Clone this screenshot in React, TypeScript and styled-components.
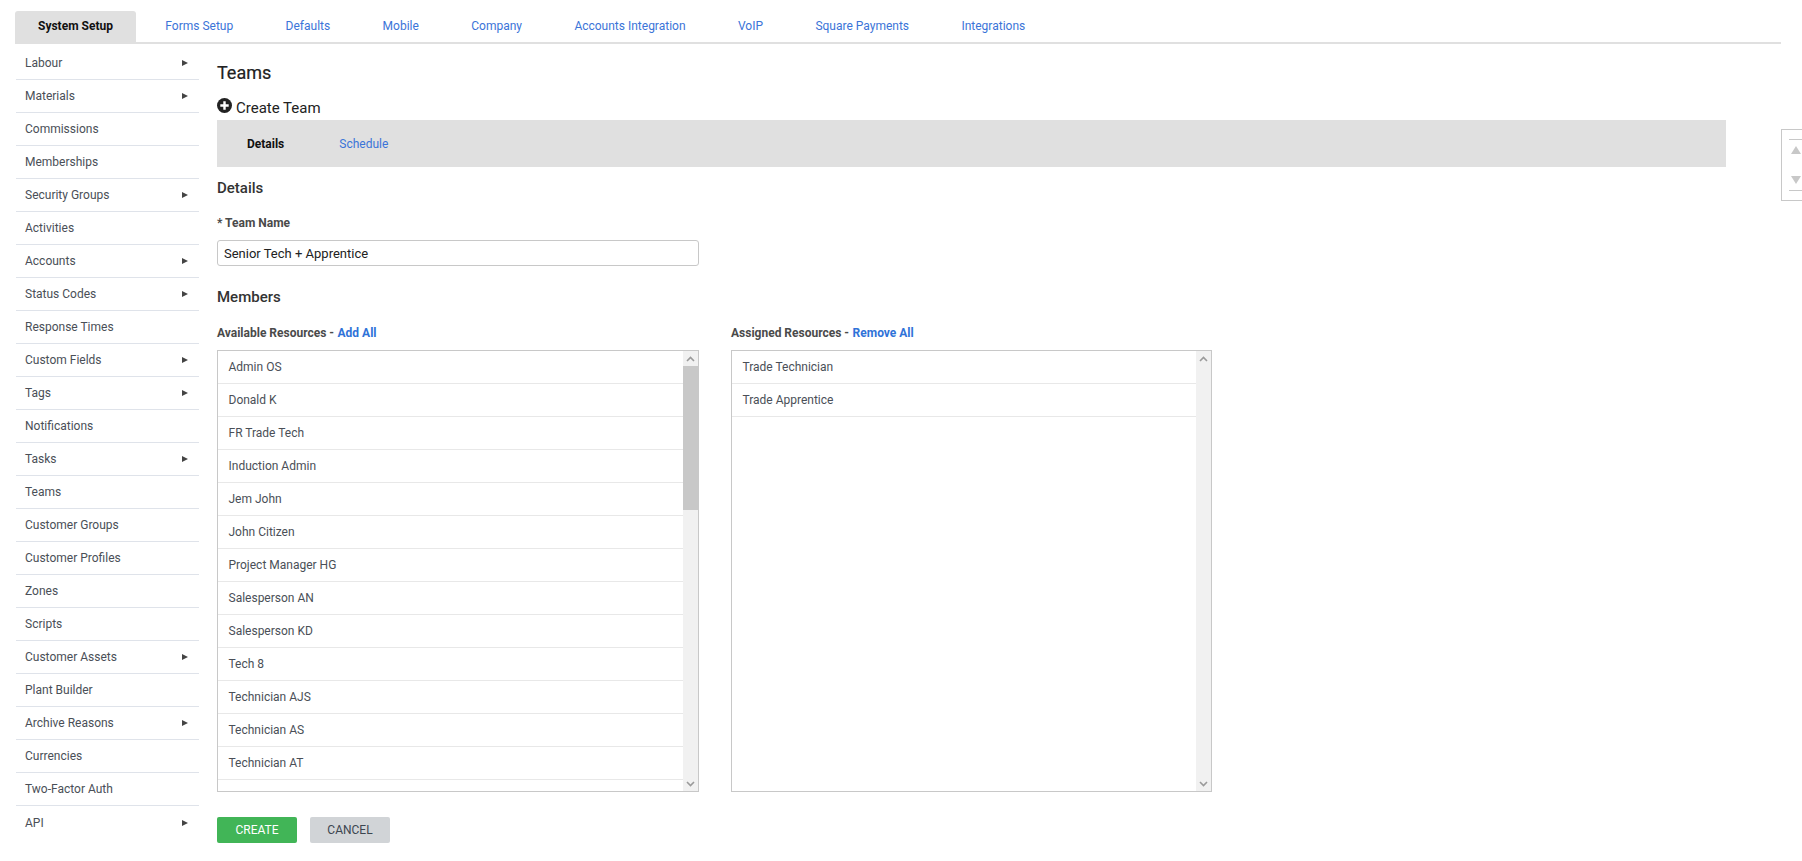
import React from 'react';
import styled, { createGlobalStyle } from 'styled-components';

const Global = createGlobalStyle`
  html, body { margin: 0; padding: 0; background: #fff; height: 100%; overflow: hidden; }
  body { font-family: Roboto, "Liberation Sans", sans-serif; font-size: 12px; color: #444; }
  * { box-sizing: border-box; }
`;
const Page = styled.div`
  position: relative;
  width: 1802px;
  height: 861px;
  padding: 11px 21px 0 15px;
  overflow: hidden;
`;
const TabBar = styled.nav`
  display: flex;
  gap: 6.4px;
  height: 33px;
  border-bottom: 2px solid #e0e0e0;
`;
const Tab = styled.a<{ $active?: boolean }>`
  height: 31px;
  display: flex;
  align-items: center;
  padding: 0 23px 1px;
  font-size: 12px;
  border-radius: 3px 3px 0 0;
  color: ${p => (p.$active ? '#111' : '#3b74d8')};
  font-weight: ${p => (p.$active ? 700 : 400)};
  background: ${p => (p.$active ? '#e0e0e0' : 'transparent')};
`;
const Body = styled.div`
  display: flex;
  align-items: flex-start;
`;
const Side = styled.ul`
  list-style: none;
  margin: 3px 0 0 1px;
  padding: 0;
  width: 183px;
  flex: none;
`;
const SideItem = styled.li`
  height: 33px;
  display: flex;
  align-items: center;
  justify-content: space-between;
  padding: 0 11px 0 9px;
  font-size: 12px;
  color: #4a4f57;
  border-bottom: 1px solid #dfe3ea;
  &:last-child { border-bottom: none; }
`;
const Arrow = styled.span`
  width: 0;
  height: 0;
  border-left: 6px solid #444;
  border-top: 3.5px solid transparent;
  border-bottom: 3.5px solid transparent;
`;
const Main = styled.main`
  margin-left: 18px;
  width: 1509px;
  flex: none;
`;
const Title = styled.h1`
  margin: 17px 0 0;
  font-size: 18px;
  line-height: 24px;
  font-weight: 400;
  color: #222;
  -webkit-text-stroke: 0.2px #222;
`;
const CreateRow = styled.div`
  display: flex;
  align-items: center;
  height: 20px;
  margin-top: 13px;
  gap: 4px;
  font-size: 15px;
  color: #222;
  svg { margin-top: -6px; }
`;
const SubBar = styled.div`
  display: flex;
  align-items: center;
  height: 47px;
  margin-top: 2px;
  background: #e0e0e0;
  padding-left: 30px;
  gap: 55px;
`;
const SubTab = styled.a<{ $active?: boolean }>`
  font-size: 12px;
  font-weight: ${p => (p.$active ? 700 : 400)};
  color: ${p => (p.$active ? '#111' : '#3b74d8')};
`;
const Heading = styled.h2`
  margin: 0;
  font-size: 15px;
  line-height: 20px;
  font-weight: 500;
  color: #333;
`;
const DetailsHeading = styled(Heading)`
  margin-top: 11px;
`;
const MembersHeading = styled(Heading)`
  margin-top: 21px;
`;
const Label = styled.label`
  display: block;
  margin-top: 17px;
  font-size: 12px;
  line-height: 16px;
  font-weight: 700;
  color: #4a4a4a;
`;
const NameInput = styled.input`
  display: block;
  width: 482px;
  height: 26px;
  margin-top: 9px;
  padding: 0 6px;
  border: 1px solid #c8c8c8;
  border-radius: 3px;
  font: 13px Roboto, sans-serif;
  color: #222;
  outline: none;
`;
const Columns = styled.div`
  display: flex;
  gap: 32px;
  margin-top: 18px;
`;
const Column = styled.section<{ $w: number }>`
  width: ${p => p.$w}px;
`;
const ColLabel = styled.div`
  font-size: 12px;
  line-height: 16px;
  font-weight: 700;
  color: #4a4a4a;
  a { color: #2f72d8; margin-left: 0.5px; }
`;
const ListBox = styled.div`
  position: relative;
  display: flex;
  height: 442px;
  margin-top: 9px;
  border: 1px solid #c8c8c8;
  overflow: hidden;
`;
const Rows = styled.ul`
  list-style: none;
  margin: 0;
  padding: 0;
  flex: 1;
  overflow: hidden;
`;
const Row = styled.li`
  height: 33px;
  display: flex;
  align-items: center;
  padding-left: 10.5px;
  font-size: 12px;
  color: #4a4f57;
  border-bottom: 1px solid #e8e8e8;
`;
const Track = styled.div`
  width: 15px;
  flex: none;
  display: flex;
  flex-direction: column;
  background: #f1f1f1;
`;
const ScrollBtn = styled.div`
  height: 15px;
  flex: none;
  display: flex;
  align-items: center;
  justify-content: center;
`;
const TrackFill = styled.div`
  flex: 1;
`;
const Thumb = styled.div<{ $h: number }>`
  height: ${p => p.$h}px;
  background: #c8c8c8;
`;
const Buttons = styled.div`
  display: flex;
  gap: 13px;
  margin-top: 25px;
`;
const Btn = styled.button<{ $primary?: boolean }>`
  width: 80px;
  height: 26px;
  border: none;
  border-radius: 2px;
  font: 12px Roboto, sans-serif;
  background: ${p => (p.$primary ? '#41b557' : '#d1d4d7')};
  color: ${p => (p.$primary ? '#fff' : '#3c4650')};
`;
const Widget = styled.aside`
  position: absolute;
  left: 1781px;
  top: 129px;
  width: 21px;
  height: 72px;
  border: 1px solid #c8c8c8;
  border-right: none;
  padding: 9px 0 9px 7px;
`;
const WidgetInner = styled.div`
  height: 100%;
  border-top: 1px solid #c8c8c8;
  border-bottom: 1px solid #c8c8c8;
  display: flex;
  flex-direction: column;
  justify-content: space-between;
  padding: 6px 0 6px 2px;
`;
const Tri = styled.span<{ $down?: boolean }>`
  width: 0;
  height: 0;
  border-left: 5px solid transparent;
  border-right: 5px solid transparent;
  ${p => (p.$down ? 'border-top: 8px solid #c8c8c8;' : 'border-bottom: 8px solid #c8c8c8;')}
`;

const Chevron = ({ down }: { down?: boolean }) => (
  <svg width="9" height="6" viewBox="0 0 9 6">
    <path d={down ? 'M1 1l3.5 3.5L8 1' : 'M1 5l3.5-3.5L8 5'} fill="none" stroke={'#9a9a9a'} strokeWidth="1.6" />
  </svg>
);

const tabs = ['System Setup', 'Forms Setup', 'Defaults', 'Mobile', 'Company', 'Accounts Integration', 'VoIP', 'Square Payments', 'Integrations'];
const side: [string, boolean][] = [
  ['Labour', true], ['Materials', true], ['Commissions', false], ['Memberships', false], ['Security Groups', true],
  ['Activities', false], ['Accounts', true], ['Status Codes', true], ['Response Times', false], ['Custom Fields', true],
  ['Tags', true], ['Notifications', false], ['Tasks', true], ['Teams', false], ['Customer Groups', false],
  ['Customer Profiles', false], ['Zones', false], ['Scripts', false], ['Customer Assets', true], ['Plant Builder', false],
  ['Archive Reasons', true], ['Currencies', false], ['Two-Factor Auth', false], ['API', true],
];
const available = ['Admin OS', 'Donald K', 'FR Trade Tech', 'Induction Admin', 'Jem John', 'John Citizen', 'Project Manager HG', 'Salesperson AN', 'Salesperson KD', 'Tech 8', 'Technician AJS', 'Technician AS', 'Technician AT'];
const assigned = ['Trade Technician', 'Trade Apprentice'];

export default function App() {
  return (
    <Page>
      <Global />
      <TabBar>
        {tabs.map((t, i) => <Tab key={t} $active={i === 0}>{t}</Tab>)}
      </TabBar>
      <Body>
        <Side>
          {side.map(([t, a]) => <SideItem key={t}>{t}{a && <Arrow />}</SideItem>)}
        </Side>
        <Main>
          <Title>Teams</Title>
          <CreateRow>
            <svg width="15" height="15" viewBox="0 0 15 15">
              <circle cx="7.5" cy="7.5" r="7.5" fill="#222" />
              <path d="M6.3 3.3h2.4v3h3v2.4h-3v3H6.3v-3h-3V6.3h3z" fill="#fff" />
            </svg>
            Create Team
          </CreateRow>
          <SubBar>
            <SubTab $active>Details</SubTab>
            <SubTab>Schedule</SubTab>
          </SubBar>
          <DetailsHeading>Details</DetailsHeading>
          <Label>* Team Name</Label>
          <NameInput readOnly value="Senior Tech + Apprentice" />
          <MembersHeading>Members</MembersHeading>
          <Columns>
            <Column $w={482}>
              <ColLabel>Available Resources - <a>Add All</a></ColLabel>
              <ListBox>
                <Rows>{available.map(t => <Row key={t}>{t}</Row>)}</Rows>
                <Track>
                  <ScrollBtn><Chevron /></ScrollBtn>
                  <Thumb $h={144} />
                  <TrackFill />
                  <ScrollBtn><Chevron down /></ScrollBtn>
                </Track>
              </ListBox>
            </Column>
            <Column $w={481}>
              <ColLabel>Assigned Resources - <a>Remove All</a></ColLabel>
              <ListBox>
                <Rows>{assigned.map(t => <Row key={t}>{t}</Row>)}</Rows>
                <Track>
                  <ScrollBtn><Chevron /></ScrollBtn>
                  <TrackFill />
                  <ScrollBtn><Chevron down /></ScrollBtn>
                </Track>
              </ListBox>
            </Column>
          </Columns>
          <Buttons>
            <Btn $primary>CREATE</Btn>
            <Btn>CANCEL</Btn>
          </Buttons>
        </Main>
      </Body>
      <Widget>
        <WidgetInner>
          <Tri />
          <Tri $down />
        </WidgetInner>
      </Widget>
    </Page>
  );
}
